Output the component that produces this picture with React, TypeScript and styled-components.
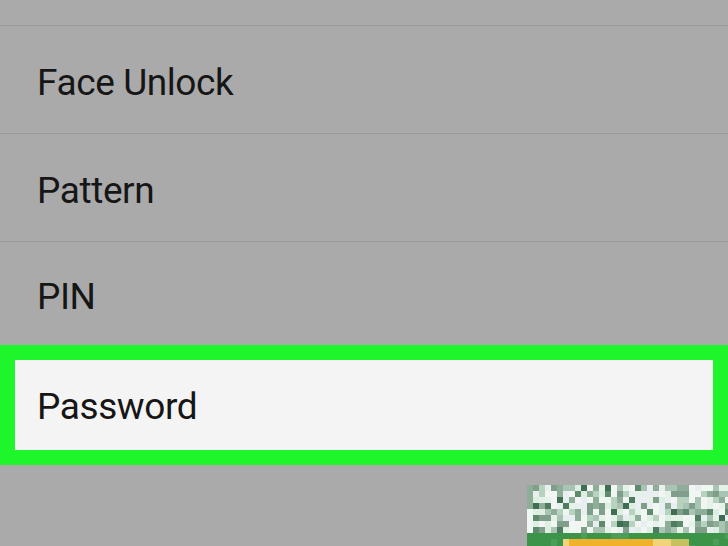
import React from "react";
import styled, { createGlobalStyle } from "styled-components";

const Global = createGlobalStyle`
  html, body { margin: 0; padding: 0; }
  body { background: #aaaaaa; font-family: Roboto, "Noto Sans", sans-serif; }
`;

const Screen = styled.div`
  width: 728px;
  height: 546px;
  overflow: hidden;
  background: #aaaaaa;
  display: flex;
  flex-direction: column;
  position: relative;
`;

const TopStub = styled.div`
  height: 25px;
  flex: none;
`;

const Row = styled.div<{ $h: number }>`
  height: ${(p) => p.$h}px;
  flex: none;
  box-sizing: border-box;
  border-top: 1px solid #9a9a9a;
  display: flex;
  align-items: center;
  padding: 6px 0 0 37px;
`;

const Label = styled.span`
  font-family: Roboto, "Noto Sans", sans-serif;
  font-size: 37px;
  color: #161616;
  letter-spacing: -0.4px;
`;

const Highlight = styled.div`
  flex: none;
  border: 15px solid #1ff52b;
  background: #f4f4f4;
  height: 87px;
  display: flex;
  align-items: center;
  padding: 3px 0 0 22px;
`;

const Bottom = styled.div`
  flex: 1;
  display: flex;
  justify-content: flex-end;
  align-items: flex-end;
`;

const Thumb = styled.svg`
  display: block;
  width: 201px;
  height: 61px;
`;

function Mosaic() {
  const cell = 6;
  const cols = 34;
  const rows = 11;
  let seed = 12345;
  const rnd = () => {
    seed = (seed * 1103515245 + 12345) & 0x7fffffff;
    return seed / 0x7fffffff;
  };
  const light = ["#eef7f0", "#e4f2e8", "#f2f5f3", "#dcefe2", "#e9eef0"];
  const mid = ["#a9c4b2", "#8fae99", "#b8d2c0", "#7f9f8a"];
  const dark = ["#4f7c60", "#5f8a6e", "#3f6e52"];
  const rects: React.ReactNode[] = [];
  for (let r = 0; r < rows; r++) {
    for (let c = 0; c < cols; c++) {
      const x = c * cell;
      const y = r * cell;
      let fill: string;
      if (y >= 43) {
        if (y >= 52 && x >= 31 && x < 140) fill = x < 40 || x > 125 ? "#f3d37a" : "#f0b22a";
        else if (y >= 52 && x >= 140 && x < 160) fill = "#c7c060";
        else fill = rnd() < 0.2 ? "#4c9d5a" : "#3b9447";
      } else {
        const v = rnd();
        fill = v < 0.55 ? light[Math.floor(rnd() * light.length)] : v < 0.85 ? mid[Math.floor(rnd() * mid.length)] : dark[Math.floor(rnd() * dark.length)];
      }
      rects.push(<rect key={`${r}-${c}`} x={x} y={y} width={cell} height={cell} fill={fill} />);
    }
  }
  return (
    <Thumb viewBox="0 0 201 61">
      {rects}
    </Thumb>
  );
}

export default function App() {
  return (
    <>
      <Global />
      <Screen>
        <TopStub />
        <Row $h={108}>
          <Label>Face Unlock</Label>
        </Row>
        <Row $h={108}>
          <Label>Pattern</Label>
        </Row>
        <Row $h={104}>
          <Label>PIN</Label>
        </Row>
        <Highlight>
          <Label>Password</Label>
        </Highlight>
        <Bottom>
          <Mosaic />
        </Bottom>
      </Screen>
    </>
  );
}
